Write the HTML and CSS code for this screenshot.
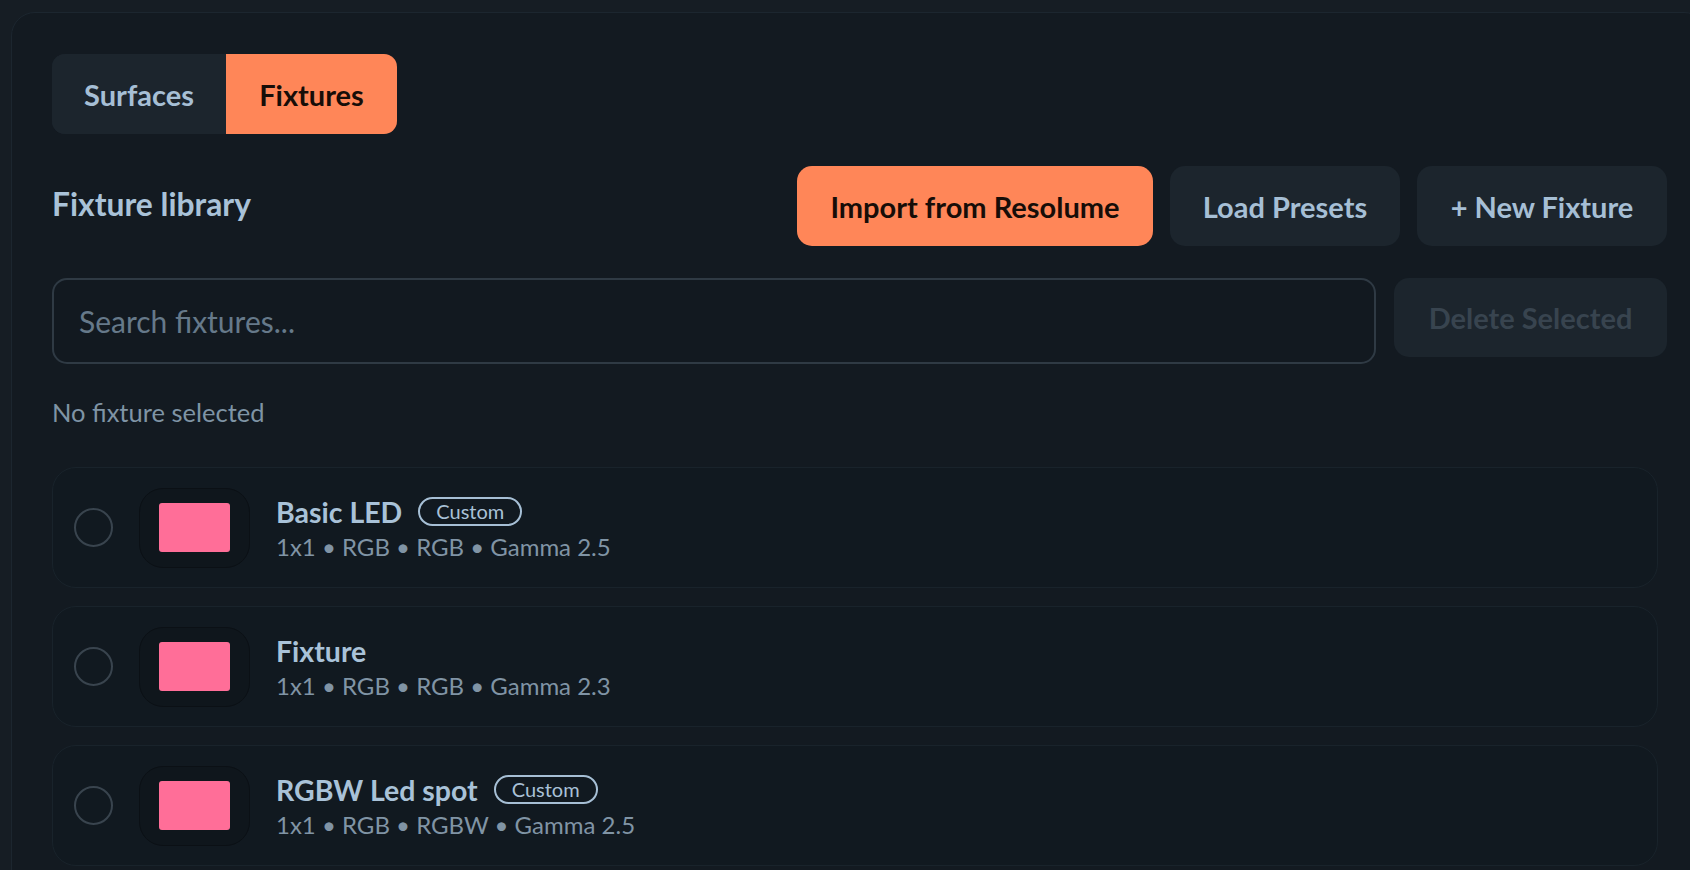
FILE: index.html
```html
<!DOCTYPE html>
<html lang="en">
<head>
<meta charset="utf-8">
<title>Fixture library</title>
<link rel="stylesheet" href="styles.css">
</head>
<body>
<div class="panel">
  <div class="tabs">
    <button class="tab tab-surfaces">Surfaces</button>
    <button class="tab tab-active">Fixtures</button>
  </div>

  <div class="header">
    <h2 class="title">Fixture library</h2>
    <div class="actions">
      <button class="btn btn-primary btn-import">Import from Resolume</button>
      <button class="btn btn-load">Load Presets</button>
      <button class="btn btn-new">+ New Fixture</button>
    </div>
  </div>

  <div class="search-row">
    <input class="search" type="text" placeholder="Search fixtures...">
    <button class="btn btn-disabled">Delete Selected</button>
  </div>

  <div class="status">No fixture selected</div>

  <div class="list">
    <div class="row">
      <span class="radio"></span>
      <span class="thumb"><span class="swatch"></span></span>
      <div class="info">
        <div class="name-line"><span class="name">Basic LED</span><span class="badge">Custom</span></div>
        <div class="meta">1x1 • RGB • RGB • Gamma 2.5</div>
      </div>
    </div>
    <div class="row">
      <span class="radio"></span>
      <span class="thumb"><span class="swatch"></span></span>
      <div class="info">
        <div class="name-line"><span class="name">Fixture</span></div>
        <div class="meta">1x1 • RGB • RGB • Gamma 2.3</div>
      </div>
    </div>
    <div class="row">
      <span class="radio"></span>
      <span class="thumb"><span class="swatch"></span></span>
      <div class="info">
        <div class="name-line"><span class="name">RGBW Led spot</span><span class="badge">Custom</span></div>
        <div class="meta">1x1 • RGB • RGBW • Gamma 2.5</div>
      </div>
    </div>
  </div>
</div>
</body>
</html>
```

FILE: styles.css
```css
* { box-sizing: border-box; }

html, body {
  margin: 0;
  padding: 0;
  background: #161d24;
  height: 100%;
  overflow: hidden;
}

body {
  font-family: Lato, "Noto Sans", sans-serif;
  color: #a9c1d7;
  padding-top: 12px;
  padding-left: 11px;
}

.panel {
  width: 1697px;
  height: 1000px;
  background: #131a21;
  border: 1px solid #1c262f;
  border-radius: 24px;
  padding: 41px 40px 0 40px;
}

button {
  font-family: inherit;
  border: none;
  cursor: pointer;
}

.tabs {
  display: inline-flex;
  height: 80px;
  border-radius: 13px;
  overflow: hidden;
  background: #1c252d;
}

.tab {
  height: 80px;
  background: #1c252d;
  color: #a6bfd5;
  font-size: 29px;
  font-weight: 700;
  padding: 0;
}

.tab-surfaces { width: 174px; }

.tab-active {
  width: 171px;
  background: #ff8658;
  color: #170d08;
}

.header {
  margin-top: 32px;
  display: flex;
  align-items: center;
  justify-content: space-between;
  height: 80px;
}

.title {
  margin: 0 0 4px 0;
  font-size: 31.8px;
  font-weight: 700;
  color: #a9c2d8;
}

.actions {
  display: flex;
  gap: 17px;
}

.btn {
  height: 80px;
  border-radius: 15px;
  background: #1c252d;
  color: #a6bfd5;
  font-size: 29px;
  font-weight: 700;
  padding: 0;
}

.btn-primary {
  background: #ff8658;
  color: #170d08;
}

.btn-import { width: 356px; }
.btn-load { width: 230px; }
.btn-new { width: 250px; }

.search-row {
  margin-top: 32px;
  display: flex;
  align-items: flex-start;
  gap: 18px;
}

.search {
  flex: 1;
  height: 86px;
  border: 2px solid #2f3a44;
  border-radius: 15px;
  background: #121920;
  padding: 0 25px;
  font-family: inherit;
  font-size: 30px;
  color: #a9c1d7;
  outline: none;
}

.search::placeholder {
  color: #66798a;
}

.btn-disabled {
  width: 273px;
  height: 79px;
  color: #38444f;
  cursor: default;
}

.status {
  margin-top: 33px;
  line-height: 30px;
  font-size: 25.5px;
  color: #7f94a5;
}

.list {
  margin-top: 40px;
  margin-right: 9px;
  display: flex;
  flex-direction: column;
  gap: 18px;
}

.row {
  height: 121px;
  display: flex;
  align-items: center;
  background: #111920;
  border: 1px solid #19232b;
  border-radius: 24px;
  padding-left: 21px;
}

.radio {
  width: 39px;
  height: 39px;
  border-radius: 50%;
  border: 2px solid #39444e;
  flex: none;
}

.thumb {
  margin-left: 26px;
  width: 111px;
  height: 80px;
  border-radius: 24px;
  background: #0f161c;
  border: 1px solid #0b1015;
  display: flex;
  align-items: center;
  justify-content: center;
  flex: none;
}

.swatch {
  width: 71px;
  height: 49px;
  border-radius: 3px;
  background: #ff6e98;
}

.info {
  margin-left: 26px;
  display: flex;
  flex-direction: column;
}

.name-line {
  display: flex;
  align-items: center;
  gap: 16px;
  height: 38px;
}

.name {
  font-size: 28.5px;
  font-weight: 700;
  color: #a9c2d8;
}

.badge {
  height: 29px;
  padding: 0 16px;
  border: 2px solid #a6bfd5;
  border-radius: 15px;
  font-size: 20px;
  line-height: 25px;
  color: #a9c1d7;
}

.meta {
  margin-top: 0;
  font-size: 24px;
  line-height: 32px;
  color: #8094a5;
}
```
